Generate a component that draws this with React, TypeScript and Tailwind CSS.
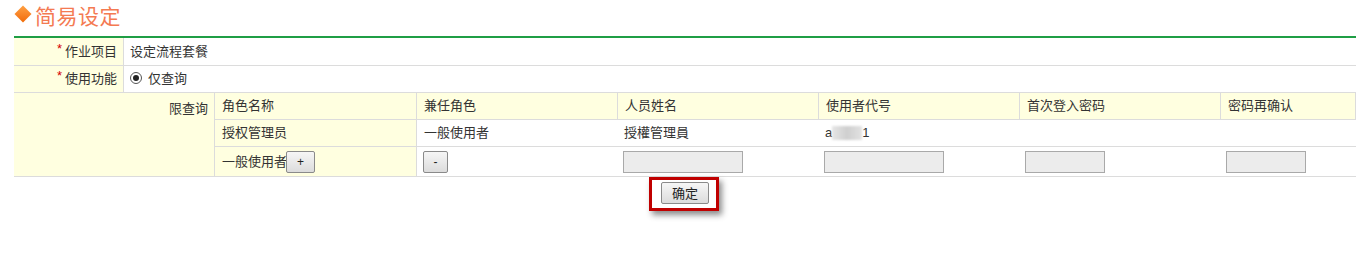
import React from "react";

const font = "font-['Liberation_Sans','Noto_Sans_CJK_SC',sans-serif]";

function GrayButton({ label, className }: { label: string; className?: string }) {
  return (
    <button
      className={`h-[22px] border border-[#8a8a8a] bg-gradient-to-b from-[#f6f6f6] to-[#dcdcdc] text-[12px] text-[#222] leading-none rounded-[2px] ${className ?? ""}`}
    >
      {label}
    </button>
  );
}

function Field({ width }: { width: string }) {
  return <div className={`h-[22px] ${width} border border-[#a9a9a9] bg-[#ececec]`} />;
}

export default function App() {
  const head = ["角色名称", "兼任角色", "人员姓名", "使用者代号", "首次登入密码", "密码再确认"];

  return (
    <main className={`w-[1366px] h-[256px] bg-white text-[13px] text-[#333] ${font}`}>
      <div className="ml-[14px] mr-[10px]">
        {/* title */}
        <div className="h-[36px] flex items-start pt-[5px]">
          <span className="mt-[3px] w-[12px] h-[12px] ml-[3px] mr-[6px] rotate-45 bg-gradient-to-br from-[#ffa040] to-[#f06a00]" />
          <h1 className="text-[21px] leading-[24px] text-[#f47a52] tracking-[0.5px]">简易设定</h1>
        </div>

        <div className="border-t-2 border-[#1f9e45]">
          {/* row 1 */}
          <div className="flex h-[28px] border-b border-[#dcdcdc]">
            <div className="w-[110px] bg-[#ffffe0] border-r border-[#dcdcdc] flex items-center justify-end pr-[6px]">
              <span className="text-[#d40000] text-[13px] mr-[3px] -mt-[6px]">*</span>
              作业项目
            </div>
            <div className="flex items-center pl-[6px]">设定流程套餐</div>
          </div>

          {/* row 2 */}
          <div className="flex h-[27px] border-b border-[#dcdcdc]">
            <div className="w-[110px] bg-[#ffffe0] border-r border-[#dcdcdc] flex items-center justify-end pr-[6px]">
              <span className="text-[#d40000] text-[13px] mr-[3px] -mt-[6px]">*</span>
              使用功能
            </div>
            <div className="flex items-center pl-[6px]">
              <span className="w-[12px] h-[12px] rounded-full border border-[#555] bg-white flex items-center justify-center mr-[6px] -mt-[2px]">
                <span className="w-[6px] h-[6px] rounded-full bg-[#222]" />
              </span>
              仅查询
            </div>
          </div>

          {/* row 3 */}
          <div className="flex">
            <div className="w-[201px] bg-[#ffffe0] border-r border-[#dcdcdc] border-b flex justify-end pr-[6px] pt-[6px]">
              限查询
            </div>
            <div className="flex-1">
              <div className="grid grid-cols-[201px_201px_201px_201px_201px_1fr] h-[27px] bg-[#ffffe0] border-b border-r border-[#dcdcdc]">
                {head.map((h, i) => (
                  <div
                    key={h}
                    className={`flex items-center pl-[7px] ${i > 0 ? "border-l border-[#dcdcdc]" : ""}`}
                  >
                    {h}
                  </div>
                ))}
              </div>

              <div className="grid grid-cols-[201px_201px_201px_201px_201px_1fr] h-[27px] border-b border-[#dcdcdc]">
                <div className="flex items-center pl-[7px] bg-[#ffffe0]">授权管理员</div>
                <div className="flex items-center pl-[7px] border-l border-[#dcdcdc]">一般使用者</div>
                <div className="flex items-center pl-[7px]">授權管理員</div>
                <div className="flex items-center pl-[7px]">
                  a
                  <span className="inline-block w-[30px] h-[14px] bg-gradient-to-r from-[#e6e6e6] via-[#cfcfcf] to-[#e2e2e2] blur-[1px]" />
                  1
                </div>
                <div />
                <div />
              </div>

              <div className="grid grid-cols-[201px_201px_201px_201px_201px_1fr] h-[30px] border-b border-[#dcdcdc]">
                <div className="flex items-center pl-[7px] bg-[#ffffe0]">
                  一般使用者
                  <GrayButton label="+" className="w-[29px] -ml-[1px]" />
                </div>
                <div className="flex items-center pl-[6px] border-l border-[#dcdcdc]">
                  <GrayButton label="-" className="w-[25px]" />
                </div>
                <div className="flex items-center pl-[6px]">
                  <Field width="w-[120px]" />
                </div>
                <div className="flex items-center pl-[6px]">
                  <Field width="w-[120px]" />
                </div>
                <div className="flex items-center pl-[6px]">
                  <Field width="w-[80px]" />
                </div>
                <div className="flex items-center pl-[6px]">
                  <Field width="w-[80px]" />
                </div>
              </div>
            </div>
          </div>

          {/* confirm */}
          <div className="flex justify-center">
            <div className="ml-[-2px] border-[3px] border-[#c00000] pl-[9px] pr-[7px] pt-[2px] pb-[4px] shadow-[3px_4px_6px_rgba(0,0,0,0.45)]">
              <GrayButton label="确定" className="w-[48px] text-[13px]" />
            </div>
          </div>
        </div>
      </div>
    </main>
  );
}
